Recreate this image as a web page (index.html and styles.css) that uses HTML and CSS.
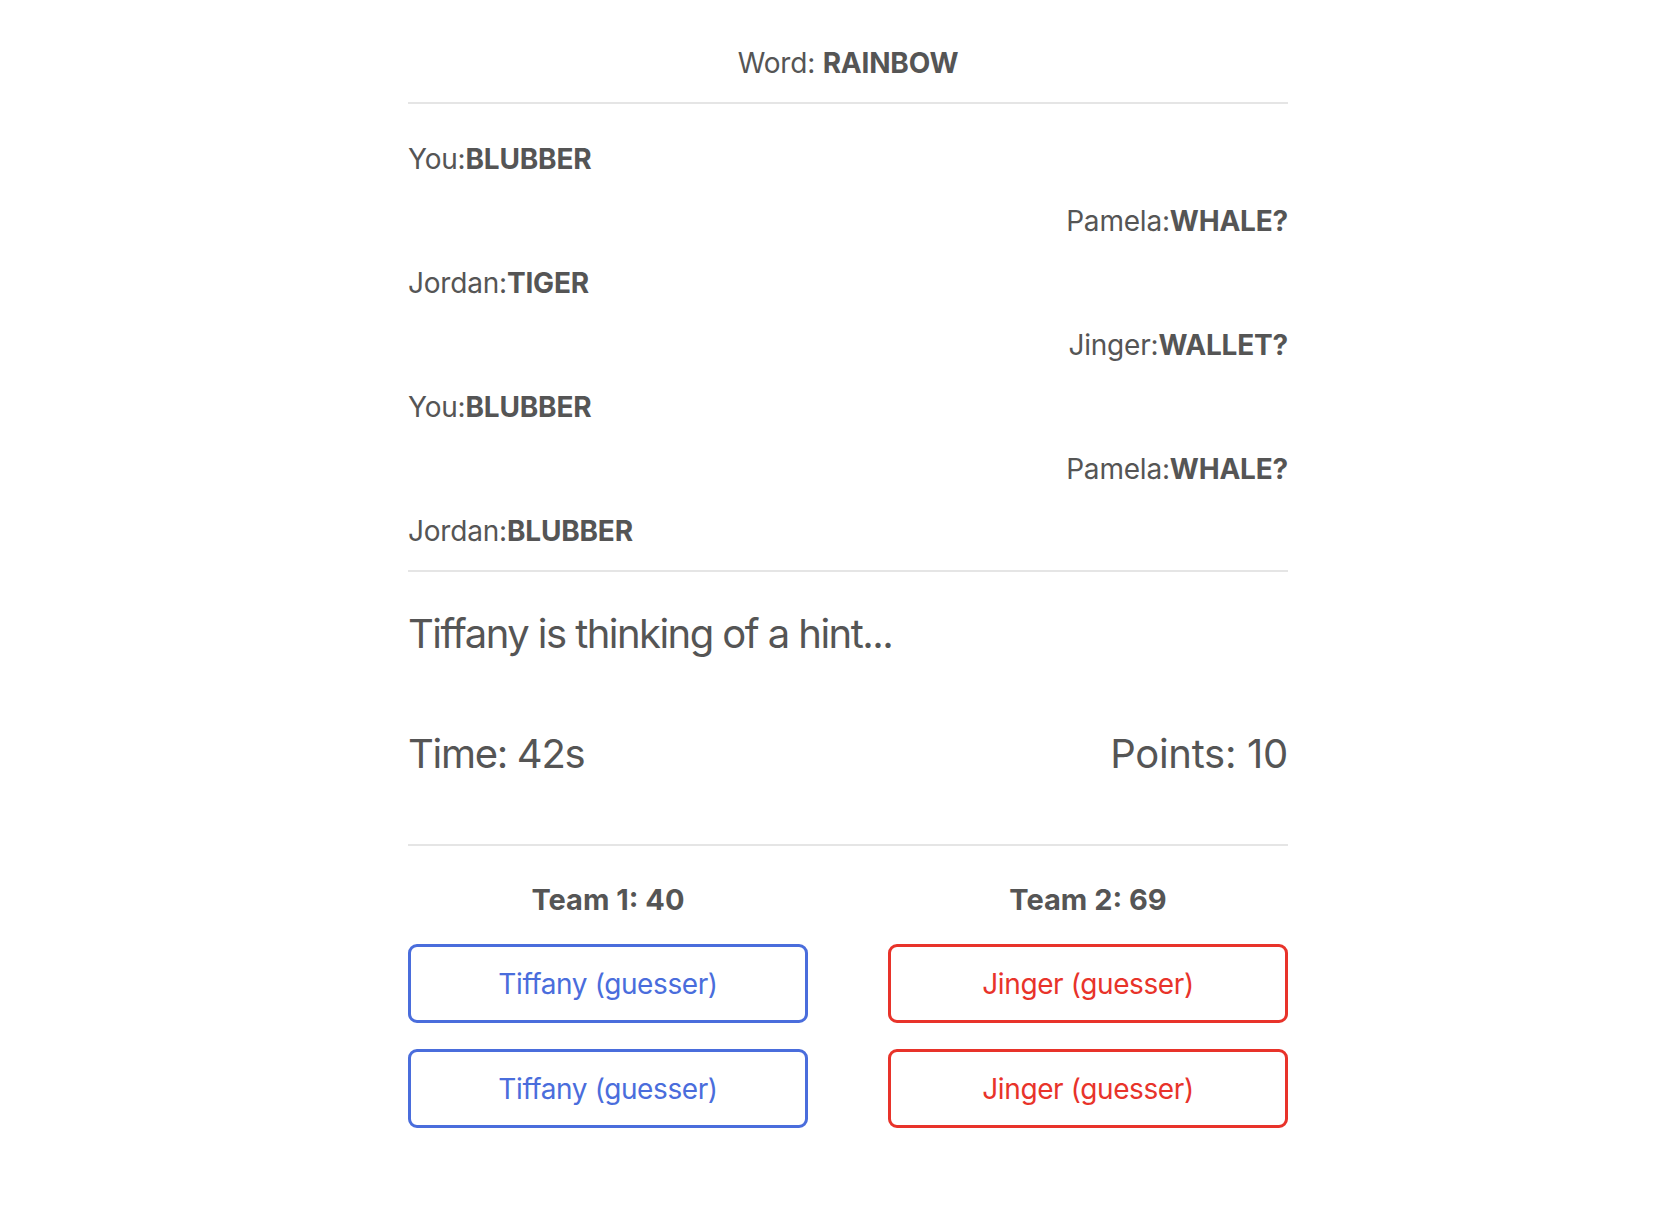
FILE: index.html
```html
<!DOCTYPE html>
<html lang="en">
<head>
<meta charset="utf-8">
<title>Game</title>
<link rel="stylesheet" href="styles.css">
</head>
<body>
<main class="game">
  <header class="word">Word: <strong>RAINBOW</strong></header>
  <section class="chat">
    <div class="msg left">You:<strong>BLUBBER</strong></div>
    <div class="msg right">Pamela:<strong>WHALE?</strong></div>
    <div class="msg left">Jordan:<strong>TIGER</strong></div>
    <div class="msg right">Jinger:<strong>WALLET?</strong></div>
    <div class="msg left">You:<strong>BLUBBER</strong></div>
    <div class="msg right">Pamela:<strong>WHALE?</strong></div>
    <div class="msg left">Jordan:<strong>BLUBBER</strong></div>
  </section>
  <section class="status">
    <p class="hint">Tiffany is thinking of a hint...</p>
    <div class="meta">
      <span class="time">Time: 42s</span>
      <span class="points">Points: 10</span>
    </div>
  </section>
  <section class="teams">
    <div class="team team-blue">
      <h2 class="team-title">Team 1: 40</h2>
      <button class="player">Tiffany (guesser)</button>
      <button class="player">Tiffany (guesser)</button>
    </div>
    <div class="team team-red">
      <h2 class="team-title">Team 2: 69</h2>
      <button class="player">Jinger (guesser)</button>
      <button class="player">Jinger (guesser)</button>
    </div>
  </section>
</main>
</body>
</html>
```

FILE: styles.css
```css
html, body {
  margin: 0;
  padding: 0;
  background: #ffffff;
}

body {
  font-family: Inter, "Noto Sans", "Liberation Sans", sans-serif;
  color: #555555;
}

.game {
  width: 880px;
  margin: 0 auto;
  padding-left: 24px;
}

strong {
  font-weight: 700;
}

.word {
  text-align: center;
  font-size: 28px;
  line-height: 32px;
  letter-spacing: -0.2px;
  padding: 47px 0 23px;
  border-bottom: 2px solid #e5e5e5;
}

.chat {
  display: flex;
  flex-direction: column;
  padding: 24px 0 8px;
  border-bottom: 2px solid #e5e5e5;
}

.msg {
  font-size: 28px;
  line-height: 62px;
  letter-spacing: -0.2px;
}

.msg.right {
  text-align: right;
}

.status {
  padding: 38px 0 66px;
  border-bottom: 2px solid #e5e5e5;
}

.hint {
  margin: 0;
  font-size: 40px;
  line-height: 48px;
  letter-spacing: -1.55px;
}

.meta {
  display: flex;
  justify-content: space-between;
  margin-top: 72px;
  font-size: 40px;
  line-height: 48px;
}

.time {
  letter-spacing: -1.3px;
}

.points {
  letter-spacing: -0.3px;
}

.teams {
  display: grid;
  grid-template-columns: 1fr 1fr;
  column-gap: 80px;
  padding-top: 37px;
}

.team {
  display: flex;
  flex-direction: column;
  gap: 26px;
}

.team-title {
  margin: 0 0 1px;
  text-align: center;
  font-size: 29px;
  line-height: 34px;
  font-weight: 700;
}

.player {
  height: 79px;
  border: 3px solid currentColor;
  border-radius: 9px;
  background: #ffffff;
  font-family: inherit;
  font-size: 28px;
  letter-spacing: -0.4px;
  cursor: pointer;
}

.team-blue .player {
  color: #4a6ddc;
}

.team-red .player {
  color: #e8332a;
}
```
